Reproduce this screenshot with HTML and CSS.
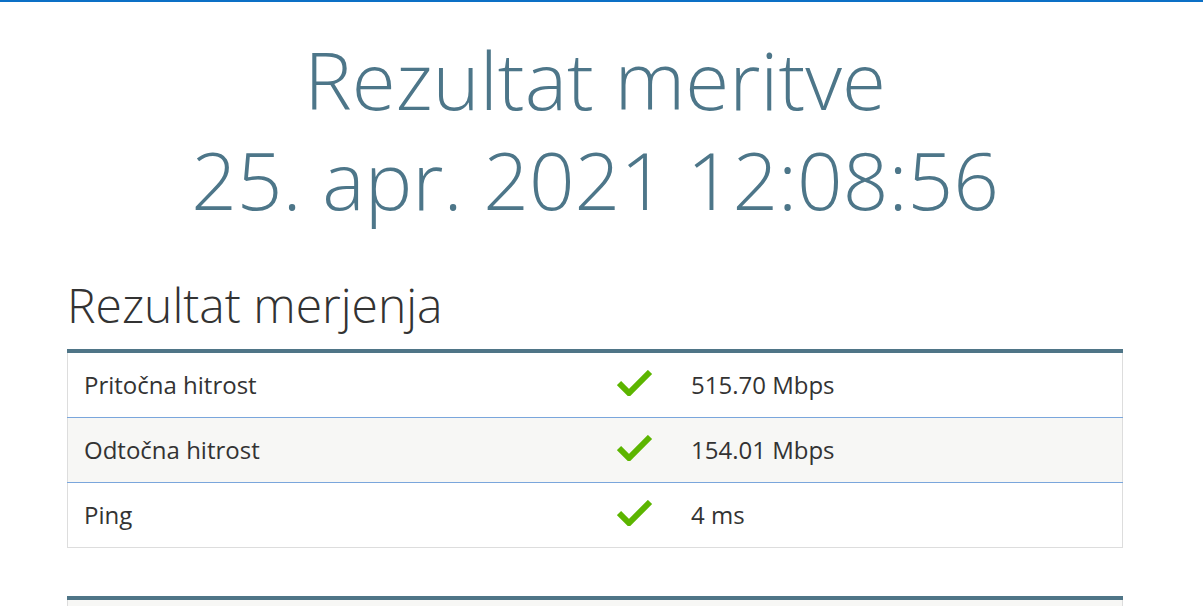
FILE: index.html
```html
<!DOCTYPE html>
<html lang="sl">
<head>
<meta charset="utf-8">
<title>Rezultat meritve</title>
<link rel="stylesheet" href="styles.css">
</head>
<body>
<div class="topbar"></div>
<main class="container">
  <h1 class="title">Rezultat meritve<br>25. apr. 2021 12:08:56</h1>
  <h2 class="section-title">Rezultat merjenja</h2>
  <table class="results">
    <tbody>
      <tr>
        <td class="label">Pritočna hitrost</td>
        <td class="status"><svg class="check" viewBox="0 0 36 26" width="36" height="26"><polyline points="2,13 12,23 33,2" /></svg></td>
        <td class="value">515.70 Mbps</td>
      </tr>
      <tr class="alt">
        <td class="label">Odtočna hitrost</td>
        <td class="status"><svg class="check" viewBox="0 0 36 26" width="36" height="26"><polyline points="2,13 12,23 33,2" /></svg></td>
        <td class="value">154.01 Mbps</td>
      </tr>
      <tr>
        <td class="label">Ping</td>
        <td class="status"><svg class="check" viewBox="0 0 36 26" width="36" height="26"><polyline points="2,13 12,23 33,2" /></svg></td>
        <td class="value">4 ms</td>
      </tr>
    </tbody>
  </table>
  <table class="results second">
    <tbody>
      <tr class="alt">
        <td class="label">&nbsp;</td>
        <td class="status"></td>
        <td class="value"></td>
      </tr>
    </tbody>
  </table>
</main>
</body>
</html>
```
FILE: styles.css
```css
html, body {
  margin: 0;
  padding: 0;
  background: #ffffff;
}
body {
  font-family: "Open Sans", "Liberation Sans", sans-serif;
  color: #333333;
}
.topbar {
  height: 2px;
  background: #0c70c6;
}
.container {
  width: 1056px;
  margin-left: 67px;
  padding-top: 27px;
}
.title {
  margin: 0;
  font-size: 80px;
  line-height: 100px;
  font-weight: 300;
  color: #4d7689;
  text-align: center;
}
.section-title {
  margin: 50px 0 19px 0;
  font-size: 48px;
  line-height: 51px;
  font-weight: 300;
  color: #333333;
}
.results {
  width: 100%;
  border-collapse: collapse;
  border-top: 4px solid #4f7587;
  border-left: 1px solid #dddddd;
  border-right: 1px solid #dddddd;
  font-size: 24px;
  line-height: 33px;
}
.results td {
  padding: 15px 16px 16px;
  border-bottom: 1px solid #7aa6dc;
  vertical-align: top;
}
.results tr:last-child td {
  border-bottom: 1px solid #dddddd;
}
.results tr.alt td {
  background: #f7f7f5;
}
.results .label {
  width: 495px;
}
.results .status {
  width: 48px;
  text-align: center;
  padding-top: 17px;
  padding-bottom: 14px;
}
.check {
  display: block;
  margin: 0 auto;
}
.check polyline {
  fill: none;
  stroke: #5cb500;
  stroke-width: 6;
  stroke-linecap: butt;
  stroke-linejoin: miter;
}
.second {
  margin-top: 48px;
}
```
